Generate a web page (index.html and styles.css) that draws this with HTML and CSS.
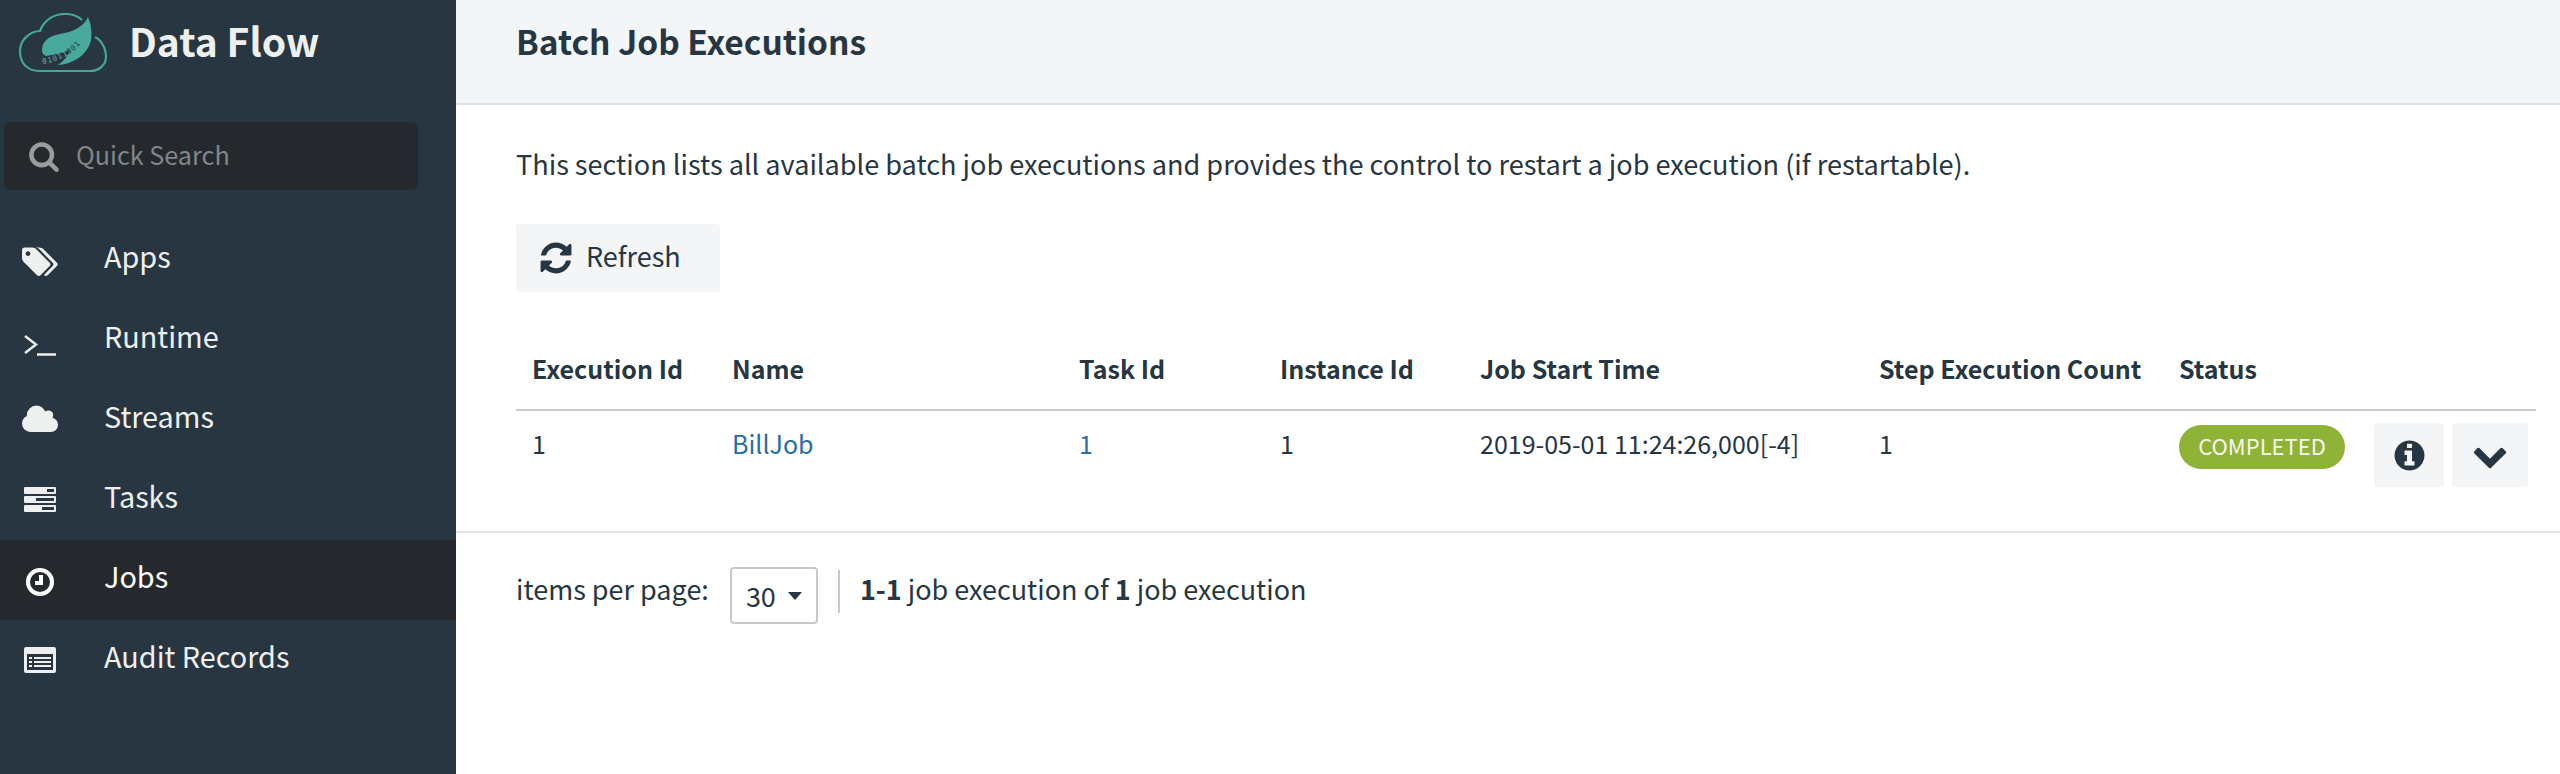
FILE: index.html
```html
<!DOCTYPE html>
<html>

<head>
    <meta charset="utf-8">
    <title>Batch Job Executions</title>
    <link rel="stylesheet" href="styles.css">
</head>

<body>
    <div id="app">
        <div class="sidebar">
            <div class="brand">
                <svg class="logo" viewBox="0 0 90 60" width="90" height="60">
                    <path class="logo-cloud" d="M22 58 H72 C82 58 88 51 88 44 C88 34 82 26 77 24 M64 7 C60 3 54 1 47 1 C36 1 26 7 22 18 C12 18 2 27 2 38 C2 49 8 58 22 58"/>
                    <path class="logo-leaf" d="M70 4 C66 14 54 19 42 21 C30 23 24 29 24 37 C24 40 25 42 28 43 C36 42 44 40 52 37 C50 43 46 48 40 52 C56 51 70 41 73 27 C74 18 73 11 70 4 Z"/>
                    <path id="bits" fill="none" d="M25 51 C37 49 55 43 66 26"/>
                    <text class="logo-bits" font-size="7.5"><textPath href="#bits">01011<tspan class="logo-bits-dark">001</tspan></textPath></text>
                </svg>
                <span class="brand-name">Data Flow</span>
            </div>
            <div class="search">
                <svg class="search-icon" viewBox="0 0 1792 1792"><path d="M1216 832q0-185-131.5-316.5t-316.5-131.5-316.5 131.5-131.5 316.5 131.5 316.5 316.5 131.5 316.5-131.5 131.5-316.5zm512 832q0 52-38 90t-90 38q-54 0-90-38l-343-342q-179 124-399 124-143 0-273.5-55.5t-225-150-150-225-55.5-273.5 55.5-273.5 150-225 225-150 273.5-55.5 273.5 55.5 225 150 150 225 55.5 273.5q0 220-124 399l343 343q37 37 37 90z"/></svg>
                <span class="search-label">Quick Search</span>
            </div>
            <div class="nav">
                <a class="nav-item">
                    <span class="nav-icon"><svg class="icon-low" viewBox="0 0 1920 1792" width="36" height="34"><path d="M448 448q0-53-37.5-90.5t-90.5-37.5-90.5 37.5-37.5 90.5 37.5 90.5 90.5 37.5 90.5-37.5 37.5-90.5zm1067 576q0 53-37 90l-491 492q-39 37-91 37-53 0-90-37l-715-716q-38-37-64.5-101t-26.5-117v-416q0-52 38-90t90-38h416q53 0 117 26.5t102 64.5l715 714q37 39 37 91zm384 0q0 53-37 90l-491 492q-39 37-91 37-36 0-59-14t-53-45l470-470q37-37 37-90 0-52-37-91l-715-714q-38-38-102-64.5t-117-26.5h224q53 0 117 26.5t102 64.5l715 714q37 39 37 91z"/></svg></span>
                    <span class="nav-label">Apps</span>
                </a>
                <a class="nav-item">
                    <span class="nav-icon"><svg class="icon-line icon-prompt" viewBox="0 0 32 24" width="32" height="24"><path d="M1 3 L12 11.5 L1 20 M13 21.5 H32"/></svg></span>
                    <span class="nav-label">Runtime</span>
                </a>
                <a class="nav-item">
                    <span class="nav-icon"><svg viewBox="0 0 1920 1792" width="36" height="34"><path d="M1920 1152q0 159-112.5 271.5t-271.5 112.5h-1088q-185 0-316.5-131.5t-131.5-316.5q0-132 71-241.5t187-163.5q-2-28-2-43 0-212 150-362t362-150q158 0 286.5 88t187.5 230q70-62 166-62 106 0 181 75t75 181q0 75-41 138 129 30 213 134.5t84 239.5z"/></svg></span>
                    <span class="nav-label">Streams</span>
                </a>
                <a class="nav-item">
                    <span class="nav-icon"><svg viewBox="0 0 32 26" width="32" height="26"><path fill-rule="evenodd" d="M1 0 H31 a1 1 0 0 1 1 1 V6 a1 1 0 0 1 -1 1 H1 a1 1 0 0 1 -1 -1 V1 a1 1 0 0 1 1 -1 Z M23 2 V5 H30 V2 Z M1 9 H31 a1 1 0 0 1 1 1 V15 a1 1 0 0 1 -1 1 H1 a1 1 0 0 1 -1 -1 V10 a1 1 0 0 1 1 -1 Z M12 11 V14 H30 V11 Z M1 18 H31 a1 1 0 0 1 1 1 V24 a1 1 0 0 1 -1 1 H1 a1 1 0 0 1 -1 -1 V19 a1 1 0 0 1 1 -1 Z M18 20 V23 H30 V20 Z"/></svg></span>
                    <span class="nav-label">Tasks</span>
                </a>
                <a class="nav-item active">
                    <span class="nav-icon"><svg class="icon-line icon-clock icon-low" viewBox="0 0 28 28" width="28" height="28"><circle cx="14" cy="14" r="12"/><path d="M15 7 V15 H9"/></svg></span>
                    <span class="nav-label">Jobs</span>
                </a>
                <a class="nav-item">
                    <span class="nav-icon"><svg viewBox="0 0 32 26" width="32" height="26"><path fill-rule="evenodd" d="M2 0 H30 a2 2 0 0 1 2 2 V24 a2 2 0 0 1 -2 2 H2 a2 2 0 0 1 -2 -2 V2 a2 2 0 0 1 2 -2 Z M3 7 V23 H29 V7 Z"/><path d="M5 10 H8 V12 H5 Z M10 10 H27 V12 H10 Z M5 14 H8 V16 H5 Z M10 14 H27 V16 H10 Z M5 18 H8 V20 H5 Z M10 18 H27 V20 H10 Z"/></svg></span>
                    <span class="nav-label">Audit Records</span>
                </a>
            </div>
        </div>
        <div class="main">
            <div class="page-header">Batch Job Executions</div>
            <div class="section">
                <p class="intro">This section lists all available batch job executions and provides the control to restart a job execution (if restartable).</p>
                <button class="btn btn-refresh">
                    <svg viewBox="0 0 1792 1792" width="36" height="36"><path d="M1639 1056q0 5-1 7-64 268-268 434.5t-478 166.5q-146 0-282.5-55t-243.5-157l-129 129q-19 19-45 19t-45-19-19-45v-448q0-26 19-45t45-19h448q26 0 45 19t19 45-19 45l-137 137q71 66 161 102t187 36q134 0 250-65t186-179q11-17 53-117 8-23 30-23h192q13 0 22.5 9.5t9.5 22.5zm25-800v448q0 26-19 45t-45 19h-448q-26 0-45-19t-19-45 19-45l138-138q-148-137-349-137-134 0-250 65t-186 179q-11 17-53 117-8 23-30 23h-199q-13 0-22.5-9.5t-9.5-22.5v-7q65-268 270-434.5t480-166.5q146 0 284 55.5t245 156.5l130-129q19-19 45-19t45 19 19 45z"/></svg>
                    <span class="btn-label">Refresh</span>
                </button>
                <table class="grid">
                    <colgroup>
                        <col class="col-id">
                        <col class="col-name">
                        <col class="col-task">
                        <col class="col-instance">
                        <col class="col-start">
                        <col class="col-count">
                        <col class="col-status">
                        <col class="col-actions">
                    </colgroup>
                    <tr>
                        <th>Execution Id</th>
                        <th>Name</th>
                        <th>Task Id</th>
                        <th>Instance Id</th>
                        <th>Job Start Time</th>
                        <th>Step Execution Count</th>
                        <th>Status</th>
                        <th></th>
                    </tr>
                    <tr>
                        <td>1</td>
                        <td><a class="link">BillJob</a></td>
                        <td><a class="link">1</a></td>
                        <td>1</td>
                        <td>2019-05-01 11:24:26,000[-4]</td>
                        <td>1</td>
                        <td><span class="badge">COMPLETED</span></td>
                        <td class="actions">
                            <div class="action-group">
                                <button class="btn btn-info"><svg viewBox="0 0 1792 1792" width="35" height="35"><path d="M1152 1376v-160q0-14-9-23t-23-9h-96v-512q0-14-9-23t-23-9h-320q-14 0-23 9t-9 23v160q0 14 9 23t23 9h96v320h-96q-14 0-23 9t-9 23v160q0 14 9 23t23 9h448q14 0 23-9t9-23zm-128-896v-160q0-14-9-23t-23-9h-192q-14 0-23 9t-9 23v160q0 14 9 23t23 9h192q14 0 23-9t9-23zm640 416q0 209-103 385.5t-279.5 279.5-385.5 103-385.5-103-279.5-279.5-103-385.5 103-385.5 279.5-279.5 385.5-103 385.5 103 279.5 279.5 103 385.5z"/></svg></button>
                                <button class="btn btn-more"><svg viewBox="0 0 1792 1792" width="36" height="36"><path d="M1683 808l-742 741q-19 19-45 19t-45-19l-742-741q-19-19-19-45.5t19-45.5l166-165q19-19 45-19t45 19l531 531 531-531q19-19 45-19t45 19l166 165q19 19 19 45.5t-19 45.5z"/></svg></button>
                            </div>
                        </td>
                    </tr>
                </table>
            </div>
            <div class="pager">
                <span class="pager-text">items per page:</span>
                <span class="page-size">30<span class="caret"></span></span>
                <span class="pager-sep"></span>
                <span class="pager-text"><b>1-1</b> job execution of <b>1</b> job execution</span>
            </div>
        </div>
    </div>
</body>

</html>
```

FILE: styles.css
```css
html, body {
    margin: 0;
    height: 100%;
    overflow: hidden;
}

body {
    font-family: "Noto Sans CJK JP", "Open Sans", sans-serif;
    font-size: 27px;
    line-height: 40px;
    color: #263642;
    background-color: #ffffff;
}

#app {
    display: flex;
    height: 774px;
}

.sidebar {
    flex: 0 0 456px;
    background-color: #283642;
    color: #eef0f0;
}

.brand {
    display: flex;
    align-items: center;
    height: 86px;
    padding-left: 18px;
}

.logo {
    flex: none;
    margin-right: 21px;
}

.logo-cloud {
    fill: none;
    stroke: #43a79a;
    stroke-width: 2.2;
}

.logo-leaf {
    fill: #48a99c;
}

.logo-bits {
    fill: #5fb5a9;
    font-family: "DejaVu Sans Mono", monospace;
    letter-spacing: 1px;
}

.logo-bits-dark {
    fill: #283642;
}

.brand-name {
    padding-bottom: 6px;
    font-size: 39px;
    font-weight: 700;
}

.search {
    display: flex;
    align-items: center;
    width: 414px;
    height: 68px;
    margin: 36px 0 30px 4px;
    border-radius: 6px;
    background-color: #25292d;
    color: #80868a;
    font-size: 25.2px;
}

.search-icon {
    width: 32px;
    height: 32px;
    margin: 0 16px 0 24px;
    fill: #9a9c9e;
}

.search-label {
    padding-bottom: 4px;
}

.nav-item {
    display: flex;
    align-items: center;
    height: 80px;
    font-size: 28.8px;
}

.nav-item.active {
    background-color: #25292d;
    color: #ffffff;
}

.nav-label {
    padding-bottom: 8px;
}

.nav-icon {
    display: flex;
    justify-content: center;
    flex: 0 0 80px;
    margin-right: 24px;
    fill: #eef0f0;
}

.icon-low {
    margin-top: 4px;
}

.icon-line {
    fill: none;
    stroke: #eef0f0;
    stroke-width: 2.4;
}

.icon-prompt {
    margin-top: 10px;
}

.icon-clock {
    stroke: #ffffff;
    stroke-width: 4;
}

.main {
    flex: 1;
    min-width: 0;
}

.page-header {
    height: 103px;
    padding-left: 60px;
    border-bottom: 2px solid #dfe3e6;
    background-color: #f4f5f7;
    font-size: 33.5px;
    font-weight: 700;
    line-height: 82px;
}

.section {
    padding: 39px 24px 26px 60px;
    border-bottom: 2px solid #dfe3e6;
}

.intro {
    margin: 0 0 40px;
    font-size: 27.1px;
}

.btn {
    display: inline-flex;
    align-items: center;
    justify-content: center;
    padding: 0;
    border: none;
    border-radius: 4px;
    background-color: #f4f5f7;
    color: #263642;
    fill: #263642;
    font: inherit;
}

.btn-refresh {
    display: flex;
    justify-content: flex-start;
    box-sizing: border-box;
    width: 204px;
    height: 68px;
    padding-left: 22px;
    gap: 12px;
}

.btn-label {
    padding-bottom: 4px;
}

.grid {
    width: 2020px;
    margin-top: 40px;
    table-layout: fixed;
    border-collapse: collapse;
    font-size: 25px;
}

.col-id { width: 200px; }
.col-name { width: 347px; }
.col-task { width: 201px; }
.col-instance { width: 200px; }
.col-start { width: 399px; }
.col-count { width: 300px; }
.col-status { width: 197px; }
.col-actions { width: 176px; }

th {
    height: 78px;
    padding: 0 0 6px 16px;
    border-bottom: 2px solid #c6cbcf;
    box-sizing: border-box;
    font-weight: 700;
    text-align: left;
}

td {
    padding: 12px 0 36px 16px;
    vertical-align: top;
}

.link {
    color: #2a6ca8;
}

.badge {
    display: block;
    width: 166px;
    height: 44px;
    margin-top: 2px;
    border-radius: 22px;
    background-color: #8fb337;
    color: #f6f8ee;
    font-size: 22px;
    line-height: 40px;
    text-align: center;
}

td.actions {
    padding: 12px 0 0 14px;
}

.action-group {
    display: flex;
    gap: 8px;
}

.btn-info {
    width: 70px;
    height: 64px;
}

.btn-more {
    width: 76px;
    height: 64px;
}

.pager {
    display: flex;
    align-items: center;
    height: 57px;
    margin-top: 34px;
    padding-left: 60px;
}

.pager-text {
    padding-bottom: 14px;
}

.page-size {
    display: flex;
    align-items: center;
    box-sizing: border-box;
    width: 88px;
    height: 57px;
    margin-left: 21px;
    padding-left: 14px;
    border: 2px solid #c6c9cc;
    border-radius: 4px;
}

.caret {
    width: 0;
    height: 0;
    margin-left: 12px;
    border-style: solid;
    border-width: 8px 7px 0;
    border-color: #263642 transparent transparent;
}

.pager-sep {
    width: 2px;
    height: 43px;
    margin: 0 20px 8px 20px;
    background-color: #c6c9cc;
}

.pager b {
    font-weight: 700;
}
```
